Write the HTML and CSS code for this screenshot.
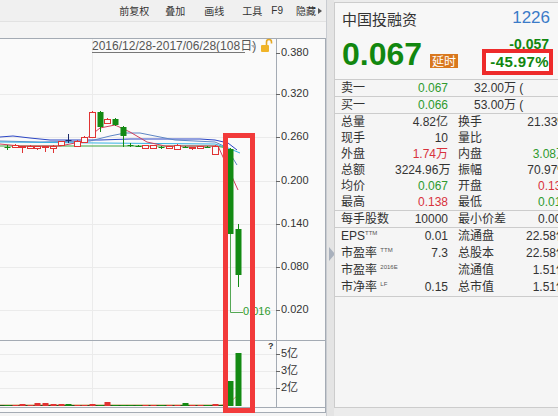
FILE: index.html
```html
<!DOCTYPE html>
<html lang="zh-CN">
<head>
    <meta charset="UTF-8">
    <meta name="viewport" content="width=device-width, initial-scale=1.0">
    <title>中国投融资 1226</title>
    <link rel="stylesheet" href="styles.css">
</head>
<body>
    <div class="app">
        <div class="chart-pane">
            <div class="toolbar">
                <span class="tb-item">前复权</span>
                <span class="tb-item gap-16">叠加</span>
                <span class="tb-item gap-19">画线</span>
                <span class="tb-item gap-18">工具</span>
                <span class="tb-item gap-9">F9</span>
                <span class="tb-item gap-13">隐藏<i class="caret"></i></span>
            </div>
            <svg class="chart" width="326" height="378" viewBox="0 38 326 378">
                <rect x="0" y="38" width="326" height="375" fill="#fafafa"/>
                <g class="grid">
                    <line x1="0" x2="276" y1="94.5" y2="94.5"/>
                    <line x1="0" x2="276" y1="137.5" y2="137.5"/>
                    <line x1="0" x2="276" y1="181.5" y2="181.5"/>
                    <line x1="0" x2="276" y1="224.5" y2="224.5"/>
                    <line x1="0" x2="276" y1="267.5" y2="267.5"/>
                    <line x1="0" x2="276" y1="310.5" y2="310.5"/>
                    <line x1="0" x2="276" y1="354.5" y2="354.5"/>
                    <line x1="0" x2="276" y1="371.5" y2="371.5"/>
                    <line x1="0" x2="276" y1="388.5" y2="388.5"/>
                    <line x1="92.5" x2="92.5" y1="38" y2="407"/>
                </g>
                <g class="frame">
                    <line x1="0" x2="326" y1="38.5" y2="38.5"/>
                    <line x1="276.5" x2="276.5" y1="38" y2="407"/>
                    <line x1="325.5" x2="325.5" y1="38" y2="413"/>
                    <line x1="0" x2="326" y1="340.5" y2="340.5"/>
                    <line x1="0" x2="326" y1="407.5" y2="407.5"/>
                    <line x1="0" x2="326" y1="412.5" y2="412.5"/>
                </g>
                <g class="ticks">
                    <line x1="276" x2="280" y1="53.5" y2="53.5"/>
                    <line x1="276" x2="280" y1="94.5" y2="94.5"/>
                    <line x1="276" x2="280" y1="137.5" y2="137.5"/>
                    <line x1="276" x2="280" y1="181.5" y2="181.5"/>
                    <line x1="276" x2="280" y1="224.5" y2="224.5"/>
                    <line x1="276" x2="280" y1="267.5" y2="267.5"/>
                    <line x1="276" x2="280" y1="310.5" y2="310.5"/>
                    <line x1="276" x2="280" y1="354.5" y2="354.5"/>
                    <line x1="276" x2="280" y1="371.5" y2="371.5"/>
                    <line x1="276" x2="280" y1="388.5" y2="388.5"/>
                </g>
                <g class="axis">
                    <text x="281" y="53.5">0.380</text>
                    <text x="281" y="94.5">0.320</text>
                    <text x="281" y="137.5">0.260</text>
                    <text x="281" y="181.5">0.200</text>
                    <text x="281" y="224.5">0.140</text>
                    <text x="281" y="267.5">0.080</text>
                    <text x="281" y="310.5">0.020</text>
                    <text x="281" y="354.5">5亿</text>
                    <text x="281" y="371.5">3亿</text>
                    <text x="281" y="388.5">2亿</text>
                </g>
                <text class="range" x="92" y="50">2016/12/28-2017/06/28(108日)</text>
                <line class="range-line" x1="92" x2="245" y1="52.5" y2="52.5"/>
                <path class="drop" d="M251 45h5l-2.5 3z"/>
                <g class="lock">
                    <rect x="261" y="45" width="8" height="7" rx="1"/>
                    <path d="M266.5 45v-3a2.5 2.5 0 0 1 5 0v1.5" fill="none" stroke="#e6a823" stroke-width="1.6"/>
                </g>
                <text class="help" x="268" y="349">?</text>
                <g class="ma">
                    <polyline stroke="#2b45c4" points="0,137 13,136 30,138 50,140 100,140 130,139 200,139 215,140 228,143 237,150"/>
                    <polyline stroke="#5f86c4" points="0,141 40,142 90,141 110,136 125,133 140,133 160,137 175,140 215,142 226,147 237,165"/>
                    <polyline stroke="#37b3e3" points="0,142 100,143 215,144 228,148 240,153"/>
                    <polyline stroke="#3ea43e" points="0,146 100,146 215,146 228,148"/>
                    <polyline stroke="#d0405e" points="0,144 20,146 60,146 80,142 90,136 100,128 115,125 130,132 147,142 165,146 218,146 238,190"/>
                    <polyline stroke="#c8a060" points="0,405 220,405 228,404 238,395"/>
                </g>
                <g id="candles"></g>
                <g id="volume"></g>
                <polyline class="low-mark" points="230.5,234 230.5,312.5 243,312.5"/>
                <text class="low-text" x="243" y="312.5">0.016</text>
                <rect class="highlight" x="225.5" y="135.5" width="27" height="275"/>
            </svg>
        </div>
        <div class="splitter"><span class="arrow"></span></div>
        <div class="quote">
            <div class="head">
                <div class="title-row">
                    <span class="name">中国投融资</span>
                    <span class="code">1226</span>
                </div>
                <div class="price-row">
                    <span class="price">0.067</span>
                    <span class="badge">延时</span>
                    <div class="change">
                        <span class="chg">-0.057</span>
                        <span class="pct">-45.97%</span>
                    </div>
                </div>
            </div>
            <div class="row book">
                <span class="lbl">卖一</span><span class="v down">0.067</span><span class="qty">32.00万 (</span>
            </div>
            <div class="row book">
                <span class="lbl">买一</span><span class="v down">0.066</span><span class="qty">53.00万 (</span>
            </div>
            <div class="block">
                <div class="row"><span class="lbl">总量</span><span class="v">4.82亿</span><span></span><span class="lbl">换手</span><span class="v">21.33%</span></div>
                <div class="row"><span class="lbl">现手</span><span class="v">10</span><span></span><span class="lbl">量比</span><span class="v"></span></div>
                <div class="row"><span class="lbl">外盘</span><span class="v up">1.74万</span><span></span><span class="lbl">内盘</span><span class="v down">3.08万</span></div>
                <div class="row"><span class="lbl">总额</span><span class="v">3224.96万</span><span></span><span class="lbl">振幅</span><span class="v">70.97%</span></div>
                <div class="row"><span class="lbl">均价</span><span class="v down">0.067</span><span></span><span class="lbl">开盘</span><span class="v up">0.130</span></div>
                <div class="row"><span class="lbl">最高</span><span class="v up">0.138</span><span></span><span class="lbl">最低</span><span class="v down">0.016</span></div>
            </div>
            <div class="block">
                <div class="row"><span class="lbl">每手股数</span><span class="v">10000</span><span></span><span class="lbl">最小价差</span><span class="v">0.001</span></div>
            </div>
            <div class="block tall">
                <div class="row"><span class="lbl">EPS<sup>TTM</sup></span><span class="v">0.01</span><span></span><span class="lbl">流通盘</span><span class="v">22.58亿</span></div>
                <div class="row"><span class="lbl">市盈率 <sup>TTM</sup></span><span class="v">7.3</span><span></span><span class="lbl">总股本</span><span class="v">22.58亿</span></div>
                <div class="row"><span class="lbl">市盈率 <sup>2016E</sup></span><span class="v"></span><span></span><span class="lbl">流通值</span><span class="v">1.51亿</span></div>
                <div class="row"><span class="lbl">市净率 <sup>LF</sup></span><span class="v">0.15</span><span></span><span class="lbl">总市值</span><span class="v">1.51亿</span></div>
            </div>
        </div>
    </div>
    <script>
        // 每根K线: 中心x, 实体上沿, 实体下沿, 最高, 最低, 类型, 成交量高度
        const candles = [
            [7, 147, 147, 145, 150, 'x', 1],
            [15, 145, 147, 144, 148, 'r', 1],
            [22, 146, 147, 146, 153, 'r', 2],
            [30, 146, 148, 145, 149, 'r', 1],
            [37, 146, 148, 146, 150, 'r', 3],
            [45, 146, 147, 146, 152, 'r', 3],
            [53, 146, 148, 145, 153, 'r', 2],
            [61, 141, 145, 141, 146, 'r', 2],
            [68, 140, 140, 134, 143, 'n', 2],
            [77, 141, 146, 140, 146, 'r', 1],
            [84, 137, 142, 136, 142, 'r', 1],
            [92, 112, 137, 111, 137, 'r', 2],
            [100, 112, 127, 111, 132, 'g', 1],
            [107, 119, 123, 118, 124, 'r', 4],
            [115, 119, 125, 118, 126, 'g', 1],
            [123, 127, 136, 126, 147, 'g', 1],
            [130, 145, 145, 143, 147, 'x', 1],
            [138, 146, 146, 145, 147, 'x', 1],
            [145, 145, 148, 145, 148, 'r', 1],
            [153, 145, 148, 145, 149, 'r', 1],
            [161, 147, 148, 146, 149, 'g', 1],
            [169, 146, 148, 146, 148, 'r', 1],
            [177, 145, 149, 144, 149, 'r', 1],
            [185, 147, 147, 146, 148, 'x', 3],
            [192, 147, 147, 147, 150, 'r', 1],
            [200, 146, 148, 146, 148, 'r', 1],
            [207, 147, 147, 146, 148, 'x', 1],
            [215, 146, 154, 145, 154, 'r', 2],
            [230, 149, 234, 148, 234, 'g', 25],
            [238, 229, 275, 224, 287, 'g', 53]
        ];
        const up = '#e03333';
        const down = '#138a13';
        let k = '';
        let v = '';
        candles.forEach(([x, t, b, h, l, kind, vol]) => {
            const c = kind === 'r' ? up : (kind === 'n' ? '#1c2a6a' : down);
            const cx = x + 0.5;
            k += `<line x1="${cx}" y1="${h}" x2="${cx}" y2="${l}" stroke="${c}"/>`;
            if (kind === 'x' || kind === 'n') {
                k += `<line x1="${cx - 3}" y1="${t + 0.5}" x2="${cx + 3}" y2="${t + 0.5}" stroke="${c}"/>`;
            } else if (kind === 'r') {
                k += `<rect x="${cx - 3}" y="${t + 0.5}" width="6" height="${Math.max(b - t, 1)}" fill="#fafafa" stroke="${c}"/>`;
            } else {
                k += `<rect x="${cx - 3}" y="${t}" width="6" height="${Math.max(b - t, 1)}" fill="${c}"/>`;
            }
            v += `<rect x="${cx - 3}" y="${406 - vol}" width="6" height="${vol}" fill="${kind === 'r' ? up : down}"/>`;
        });
        document.getElementById('candles').innerHTML = k;
        document.getElementById('volume').innerHTML = `<line x1="0" x2="226" y1="405.5" y2="405.5" stroke="#1f5a1f"/>` + v;
    </script>
</body>
</html>
```

FILE: styles.css
```css
* {
    box-sizing: border-box;
}
body {
    margin: 0;
    width: 558px;
    height: 416px;
    overflow: hidden;
    background-color: #ececec;
    font-family: "Liberation Sans", "Noto Sans CJK SC", sans-serif;
    color: #333333;
}
.app {
    display: flex;
    height: 416px;
}
.chart-pane {
    width: 326px;
    flex: none;
    display: flex;
    flex-direction: column;
    background-color: #f4f4f4;
}
.toolbar {
    height: 22px;
    display: flex;
    align-items: center;
    justify-content: flex-end;
    padding: 1px 4px 0 0;
    font-family: "Noto Sans CJK SC", sans-serif;
    font-size: 10px;
    color: #333333;
    background-color: #f0f0f0;
    border-bottom: 1px solid #e2e2e2;
}
.tb-item {
    display: flex;
    align-items: center;
    line-height: 14px;
}
.gap-16 { margin-left: 16px; }
.gap-19 { margin-left: 19px; }
.gap-18 { margin-left: 18px; }
.gap-9 { margin-left: 9px; font-family: "Liberation Sans", sans-serif; }
.gap-13 { margin-left: 13px; }
.caret {
    width: 0;
    height: 0;
    margin-left: 2px;
    border-left: 4px solid #555555;
    border-top: 3px solid transparent;
    border-bottom: 3px solid transparent;
}
.chart {
    display: block;
    margin-top: 16px;
}
.chart .grid line {
    stroke: #ebebeb;
}
.chart .frame line {
    stroke: #a4abb4;
}
.chart .ticks line {
    stroke: #666666;
}
.chart text {
    font-family: "Liberation Sans", "Noto Sans CJK SC", sans-serif;
    font-size: 11px;
    fill: #333333;
}
.chart .axis text {
    dominant-baseline: middle;
}
.chart .range {
    font-size: 12px;
    fill: #555555;
}
.range-line {
    stroke: #777777;
}
.drop {
    fill: #b0b0b0;
}
.lock rect {
    fill: #f0b429;
}
.chart .help {
    font-size: 9px;
    font-weight: bold;
    fill: #333333;
}
.ma polyline {
    fill: none;
    stroke-width: 1;
}
.low-mark {
    fill: none;
    stroke: #55a855;
}
.chart .low-text {
    fill: #2f9a2f;
    dominant-baseline: middle;
}
.highlight {
    fill: none;
    stroke: #f23a3a;
    stroke-width: 5;
}
.splitter {
    width: 8px;
    flex: none;
    padding: 247px 0 0 2px;
    background-color: #e4e4e4;
    border-left: 1px solid #c9ccd1;
}
.arrow {
    display: block;
    width: 0;
    height: 0;
    border-left: 6px solid #a9b1bd;
    border-top: 7px solid transparent;
    border-bottom: 7px solid transparent;
}
.quote {
    width: 224px;
    flex: none;
    height: 406px;
    margin-top: 2px;
    overflow: hidden;
    background-color: #f5f5f5;
    border: 1px solid #cccccc;
    border-right: none;
}
.head {
    height: 77px;
    padding: 5px 5px 0 7px;
    border-bottom: 1px solid #cccccc;
    background-color: #f7f7f7;
}
.title-row {
    display: flex;
    justify-content: space-between;
    align-items: center;
    height: 20px;
    padding-right: 3px;
}
.name {
    font-family: "Noto Sans CJK SC", sans-serif;
    font-size: 15px;
    color: #333333;
}
.code {
    font-size: 17px;
    color: #3b7bc8;
}
.price-row {
    display: flex;
    margin-top: 10px;
}
.price {
    font-size: 32px;
    font-weight: bold;
    line-height: 32px;
    color: #12870f;
}
.badge {
    align-self: flex-end;
    margin: 0 0 7px 8px;
    padding: 0 2px;
    font-family: "Noto Sans CJK SC", sans-serif;
    font-size: 12px;
    line-height: 14px;
    color: #ffffff;
    background-color: #d9781e;
}
.change {
    margin-left: auto;
    margin-top: 1px;
    display: flex;
    flex-direction: column;
    align-items: flex-end;
}
.chg {
    padding-right: 4px;
    font-size: 14px;
    font-weight: bold;
    line-height: 11px;
    color: #12870f;
}
.pct {
    width: 71px;
    height: 26px;
    margin-top: -1px;
    border: 4px solid #ee2b2b;
    background-color: #ffffff;
    text-align: right;
    font-size: 15px;
    font-weight: bold;
    line-height: 18px;
    letter-spacing: 0.4px;
    color: #12870f;
}
.row {
    display: grid;
    grid-template-columns: 54px 53px 10px 55px 55px;
    padding-left: 6px;
    font-size: 12px;
    line-height: 16px;
    white-space: nowrap;
}
.book {
    border-bottom: 1px solid #cccccc;
}
.block {
    border-bottom: 1px solid #cccccc;
}
.tall .row {
    line-height: 17px;
}
.lbl {
    font-family: "Liberation Sans", "Noto Sans CJK SC", sans-serif;
    color: #333333;
}
.lbl sup {
    font-family: "Liberation Sans", sans-serif;
    font-size: 6px;
    line-height: 0;
    vertical-align: 5px;
    color: #555555;
}
.v {
    text-align: right;
}
.qty {
    grid-column: 4 / 6;
    padding-left: 16px;
}
.up {
    color: #d8323c;
}
.down {
    color: #2e9a2e;
}
```
